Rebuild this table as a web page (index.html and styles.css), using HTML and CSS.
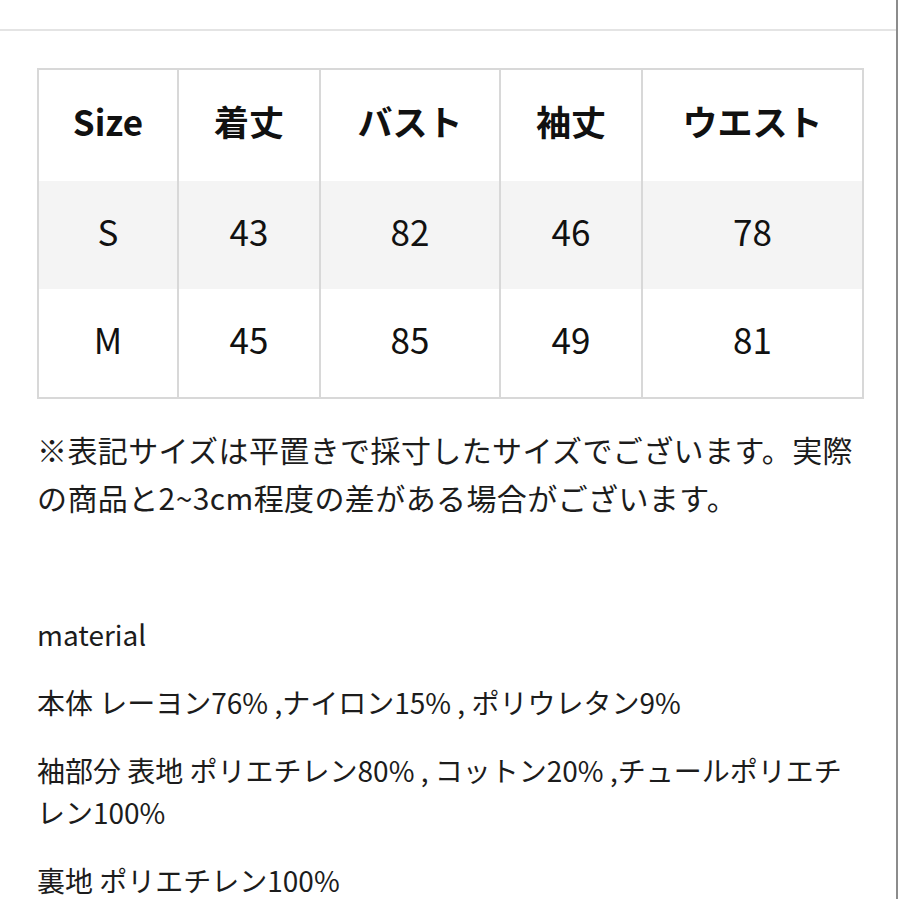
FILE: index.html
```html
<!DOCTYPE html>
<html lang="ja">
<head>
<meta charset="utf-8">
<title>サイズ表</title>
<link rel="stylesheet" href="styles.css">
</head>
<body>
<div class="page">
  <div class="topbar"></div>
  <div class="content">
    <table class="size-table">
      <colgroup>
        <col class="c1"><col class="c2"><col class="c3"><col class="c4"><col class="c5">
      </colgroup>
      <thead>
        <tr class="head-row">
          <th>Size</th><th>着丈</th><th>バスト</th><th>袖丈</th><th>ウエスト</th>
        </tr>
      </thead>
      <tbody>
        <tr class="row shaded">
          <td>S</td><td>43</td><td>82</td><td>46</td><td>78</td>
        </tr>
        <tr class="row">
          <td>M</td><td>45</td><td>85</td><td>49</td><td>81</td>
        </tr>
      </tbody>
    </table>

    <p class="notice">※表記サイズは平置きで採寸したサイズでございます。実際の商品と2~3cm程度の差がある場合がございます。</p>

    <div class="material">
      <p>material</p>
      <p>本体 レーヨン76% ,ナイロン15% , ポリウレタン9%</p>
      <p>袖部分 表地 ポリエチレン80% , コットン20% ,チュールポリエチレン100%</p>
      <p>裏地 ポリエチレン100%</p>
    </div>
  </div>
</div>
</body>
</html>
```

FILE: styles.css
```css
html, body {
  margin: 0;
  padding: 0;
  background: #ffffff;
}

body {
  font-family: "Noto Sans CJK JP", "Noto Sans", sans-serif;
  color: #1c1c1c;
}

.page {
  width: 896px;
  height: 899px;
  border-right: 2px solid #8c8c8c;
  overflow: hidden;
}

.topbar {
  height: 29px;
  border-bottom: 2px solid #e4e4e4;
}

.content {
  padding: 37px 0 0 37px;
}

.size-table {
  width: 825px;
  table-layout: fixed;
  border-collapse: collapse;
  border: 2px solid #d8d8d8;
}

.c1 { width: 140px; }
.c2 { width: 142px; }
.c3 { width: 180px; }
.c4 { width: 142px; }
.c5 { width: 221px; }

.size-table th,
.size-table td {
  border-left: 2px solid #d8d8d8;
  border-right: 2px solid #d8d8d8;
  text-align: center;
  padding: 0;
  color: #111111;
}

.head-row th {
  height: 100px;
  padding-bottom: 11px;
  font-size: 35px;
  font-weight: 700;
  background: #ffffff;
}

.row td {
  height: 99px;
  padding-bottom: 9px;
  font-size: 35px;
  font-weight: 400;
}

.row.shaded td {
  background: #f4f4f4;
}

.notice {
  width: 825px;
  margin: 26px 0 0 0;
  font-size: 30px;
  line-height: 48px;
  letter-spacing: 0.4px;
  color: #1c1c1c;
}

.material {
  margin-top: 92px;
  width: 815px;
  display: flex;
  flex-direction: column;
  gap: 26px;
}

.material p {
  margin: 0;
  font-size: 28px;
  line-height: 42px;
  color: #1c1c1c;
}
```
